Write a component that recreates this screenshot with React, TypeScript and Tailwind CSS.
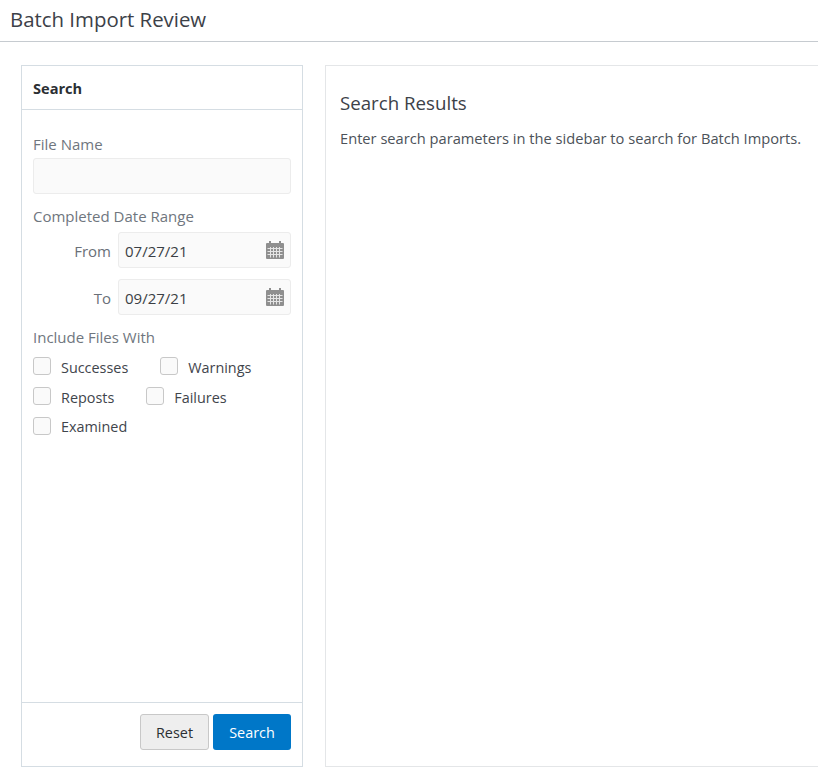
import { ReactNode } from "react"

function CalendarIcon() {
  return (
    <svg width="18" height="18" viewBox="0 0 18 18" className="shrink-0">
      <rect x="0" y="2" width="18" height="16" rx="1" fill="#8f8f8f" />
      <rect x="3" y="0" width="2" height="4" fill="#8f8f8f" />
      <rect x="13" y="0" width="2" height="4" fill="#8f8f8f" />
      <g fill="#e4e4e4">
        <rect x="1.5" y="7" width="15" height="1" />
        <rect x="1.5" y="10" width="15" height="1" />
        <rect x="1.5" y="13" width="15" height="1" />
        <rect x="4" y="6" width="1" height="10.5" />
        <rect x="7" y="6" width="1" height="10.5" />
        <rect x="10" y="6" width="1" height="10.5" />
        <rect x="13" y="6" width="1" height="10.5" />
      </g>
    </svg>
  )
}

function DateField({ label, value }: { label: string; value: string }) {
  return (
    <div className="flex items-center text-[15px]">
      <span className="w-[85px] pr-[7px] pt-[2px] text-right text-[#6a7078]">{label}</span>
      <div className="flex h-[36px] w-[173px] items-center justify-between rounded-[3px] border border-[#ececec] bg-[#fafafa] pl-[6px] pr-[6px] text-[#3a3f45]">
        <span className="pt-[2px]">{value}</span>
        <CalendarIcon />
      </div>
    </div>
  )
}

function Check({ label, tight }: { label: string; tight?: boolean }) {
  return (
    <label className="flex items-center">
      <span className="h-[18px] w-[18px] rounded-[3px] border border-[#c8c8c8] bg-[#fafafa]" />
      <span className={tight ? "ml-[10px] pt-[1px] text-[14.4px] text-[#3f454c]" : "ml-[10px] pt-[3px] text-[14.4px] text-[#3f454c]"}>
        {label}
      </span>
    </label>
  )
}

function Row({ children }: { children: ReactNode }) {
  return <div className="flex h-[18px] items-center">{children}</div>
}

export default function App() {
  return (
    <div className="h-[770px] w-[818px] overflow-hidden bg-white font-['Open_Sans','Noto_Sans',sans-serif] text-[14px]">
      <header className="h-[42px] border-b border-[#c6cbd0] pl-[10px] pt-[5px] text-[20.4px] leading-[28px] text-[#3c4148]">
        Batch Import Review
      </header>
      <div className="flex pl-[21px] pt-[23px]">
        <aside className="flex h-[702px] w-[282px] shrink-0 flex-col border border-[#d5dde3]">
          <div className="h-[44px] border-b border-[#d5dde3] pl-[11px] pt-[11px] text-[14.6px] font-bold leading-[22px] text-[#2b2f33]">
            Search
          </div>
          <div className="flex-1 px-[11px] pt-[24px] text-[15px]">
            <div className="leading-[20px] text-[#6f767e]">File Name</div>
            <div className="mt-[4px] h-[36px] w-[258px] rounded-[3px] border border-[#ececec] bg-[#fafafa]" />
            <div className="mt-[12px] leading-[20px] text-[#6f767e]">Completed Date Range</div>
            <div className="mt-[6px] flex flex-col gap-[11px]">
              <DateField label="From" value="07/27/21" />
              <DateField label="To" value="09/27/21" />
            </div>
            <div className="mt-[12px] leading-[20px] text-[#6f767e]">Include Files With</div>
            <div className="mt-[10px] flex flex-col gap-[12px]">
              <Row>
                <Check label="Successes" />
                <div className="ml-[32px]"><Check label="Warnings" /></div>
              </Row>
              <Row>
                <Check label="Reposts" />
                <div className="ml-[32px]"><Check label="Failures" /></div>
              </Row>
              <Row>
                <Check label="Examined" tight />
              </Row>
            </div>
          </div>
          <div className="flex h-[64px] justify-end gap-[4px] border-t border-[#d5dde3] pr-[11px] pt-[11px] text-[14.4px]">
            <button className="h-[36px] w-[69px] rounded-[3px] border border-[#c8c8c8] bg-[#eeeeee] pt-[2px] text-[#2b2f33]">
              Reset
            </button>
            <button className="h-[36px] w-[78px] rounded-[3px] bg-[#0077c8] pt-[2px] text-white">
              Search
            </button>
          </div>
        </aside>
        <main className="ml-[22px] h-[702px] flex-1 border-y border-l border-[#e4e6e8] pl-[14px] pt-[24px]">
          <h2 className="text-[18.7px] leading-[26px] text-[#3c4148]">Search Results</h2>
          <p className="mt-[12px] text-[14.67px] leading-[20px] text-[#4c5259]">
            Enter search parameters in the sidebar to search for Batch Imports.
          </p>
        </main>
      </div>
    </div>
  )
}
